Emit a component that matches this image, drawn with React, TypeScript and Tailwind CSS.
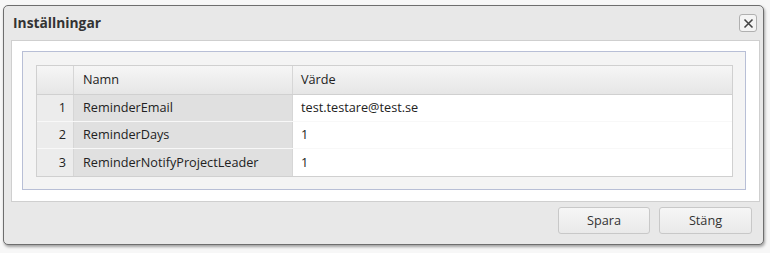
import React from 'react';

const rows = [
  { n: 1, name: 'ReminderEmail', value: 'test.testare@test.se' },
  { n: 2, name: 'ReminderDays', value: '1' },
  { n: 3, name: 'ReminderNotifyProjectLeader', value: '1' },
];

export default function App() {
  return (
    <div
      className="w-[770px] h-[253px] bg-[#f7f7f7] pt-[5px] pl-[3px] text-[12.7px] text-[#222]"
      style={{ fontFamily: '"Open Sans", "Noto Sans", sans-serif' }}
    >
      <div className="w-[761px] h-[240px] rounded-[5px] border border-[#6e6e6e] bg-[#e8e8e8] shadow-[1px_2px_3px_rgba(0,0,0,0.35)] flex flex-col">
        {/* title bar */}
        <div className="h-[34px] flex items-center justify-between pl-[9px] pr-[6px]">
          <span className="font-bold text-[13.8px] text-[#333]">Inställningar</span>
          <button className="w-[18px] h-[18px] rounded-[3px] border border-[#b0b0b0] bg-[#f4f4f4] flex items-center justify-center">
            <svg width="11" height="11" viewBox="0 0 11 11">
              <path d="M1.5 1.5 L9.5 9.5 M9.5 1.5 L1.5 9.5" stroke="#444" strokeWidth="1.6" />
            </svg>
          </button>
        </div>

        {/* content */}
        <div className="ml-[7px] mr-[3px] h-[162px] bg-white border border-[#cfcfcf] pt-[10px] pl-[10px] pr-[13px] pb-[11px]">
          <div className="h-full bg-[#f4f4f4] border border-[#b8bfd6] pt-[13px] pl-[13px] pr-[12px] pb-[13px]">
            <div className="border border-[#d0d0d0] bg-white">
              <div className="flex h-[29px] border-b border-[#d0d0d0] bg-gradient-to-b from-[#f6f6f6] to-[#e6e6e6]">
                <div className="w-[37px] border-r border-[#d6d6d6]" />
                <div className="w-[219px] border-r border-[#d6d6d6] flex items-center pl-[9px]">Namn</div>
                <div className="flex-1 flex items-center pl-[8px]">Värde</div>
              </div>
              {rows.map((r, i) => (
                <div
                  key={r.n}
                  className={
                    i < rows.length - 1
                      ? 'flex h-[27px] border-b border-[#f8f8f8]'
                      : 'flex h-[27px]'
                  }
                >
                  <div className="w-[37px] bg-[#ececec] border-r border-[#d6d6d6] flex items-center justify-end pr-[7px]">
                    {r.n}
                  </div>
                  <div className="w-[219px] bg-[#e0e0e0] border-r border-[#d6d6d6] flex items-center pl-[9px]">
                    {r.name}
                  </div>
                  <div className="flex-1 bg-white flex items-center pl-[8px]">{r.value}</div>
                </div>
              ))}
            </div>
          </div>
        </div>

        {/* buttons */}
        <div className="flex justify-end gap-[9px] pr-[11px] pt-[5px]">
          <button className="w-[92px] h-[27px] rounded-[3px] border border-[#c8c8c8] bg-gradient-to-b from-[#f6f6f6] to-[#e9e9e9] text-[#333]">
            Spara
          </button>
          <button className="w-[93px] h-[27px] rounded-[3px] border border-[#c8c8c8] bg-gradient-to-b from-[#f6f6f6] to-[#e9e9e9] text-[#333]">
            Stäng
          </button>
        </div>
      </div>
    </div>
  );
}
